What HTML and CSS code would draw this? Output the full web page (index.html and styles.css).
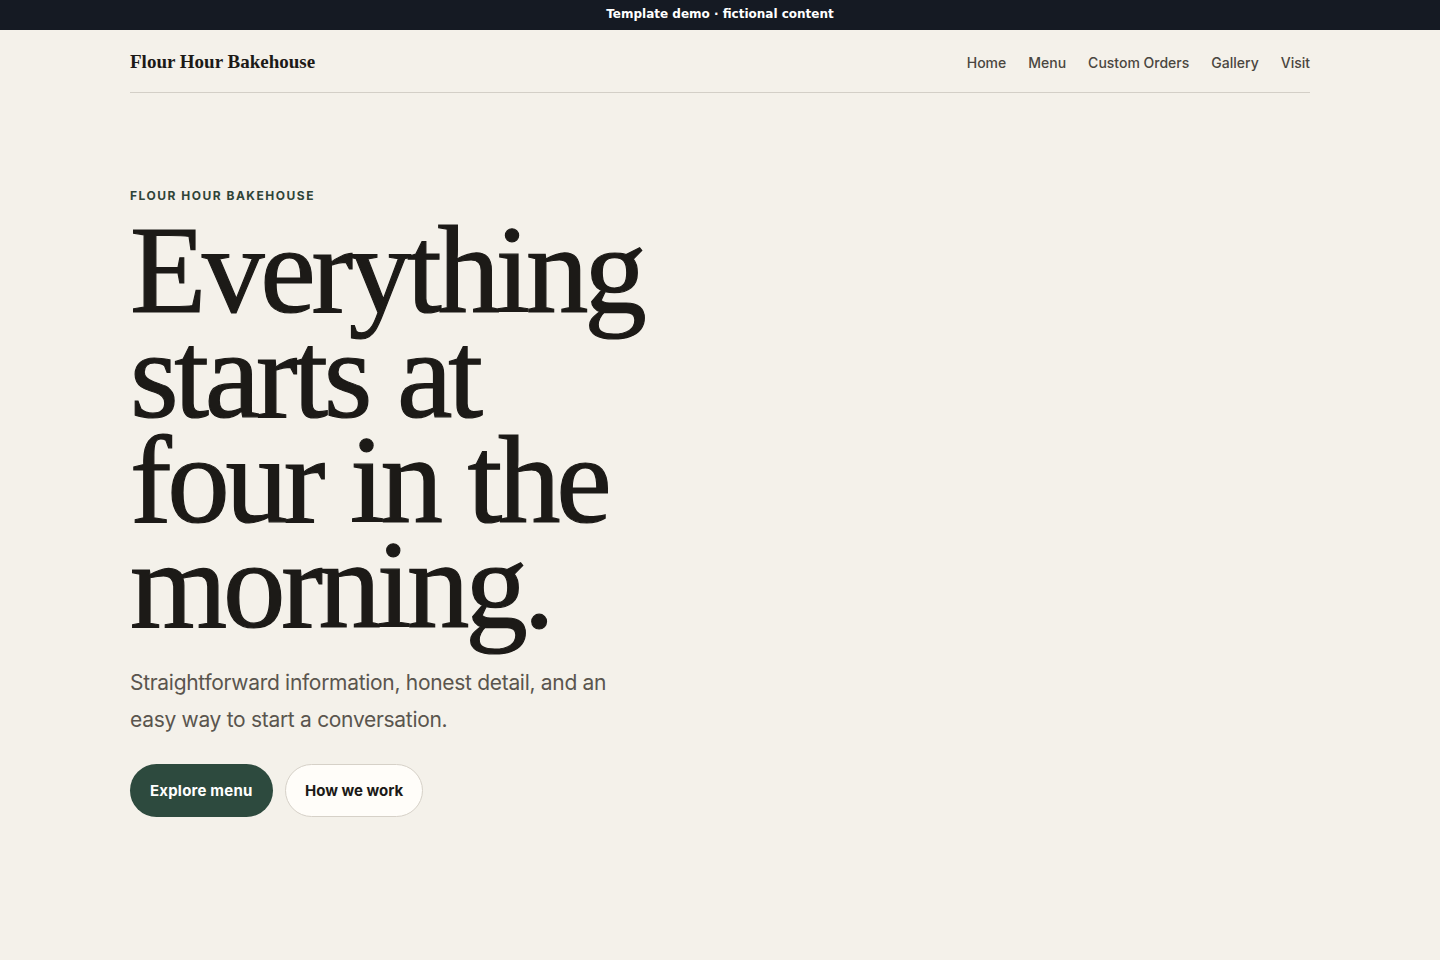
FILE: index.html
```html
<!DOCTYPE html>
<html lang="en">
<head>
<meta charset="utf-8">
<title>Flour Hour Bakehouse</title>
<link rel="stylesheet" href="styles.css">
</head>
<body>
<div class="demo-bar">Template demo · fictional content</div>
<div class="container">
  <header class="site-header">
    <a class="brand" href="#">Flour Hour Bakehouse</a>
    <nav class="nav">
      <a href="#">Home</a>
      <a href="#">Menu</a>
      <a href="#">Custom Orders</a>
      <a href="#">Gallery</a>
      <a href="#">Visit</a>
    </nav>
  </header>
  <main class="hero">
    <p class="eyebrow">FLOUR HOUR BAKEHOUSE</p>
    <h1 class="headline">Everything starts at four in the morning.</h1>
    <p class="lede">Straightforward information, honest detail, and an easy way to start a conversation.</p>
    <div class="actions">
      <a class="btn btn-primary" href="#">Explore menu</a>
      <a class="btn btn-secondary" href="#">How we work</a>
    </div>
  </main>
</div>
</body>
</html>
```
FILE: styles.css
```css
* { box-sizing: border-box; }
html, body { margin: 0; padding: 0; }
body {
  background: #f4f1ea;
  color: #1c1a17;
  font-family: Inter, "Noto Sans", sans-serif;
}
a { text-decoration: none; color: inherit; }

.demo-bar {
  height: 30px;
  background: #151a23;
  color: #ffffff;
  font-family: "DejaVu Sans", sans-serif;
  font-weight: bold;
  font-size: 12px;
  display: flex;
  align-items: center;
  justify-content: center;
  padding-bottom: 2px;
}

.container {
  width: 1180px;
  margin: 0 auto;
}

.site-header {
  height: 63px;
  display: flex;
  align-items: center;
  justify-content: space-between;
  border-bottom: 1px solid #d3cfc7;
  padding-top: 2px;
}
.brand {
  font-family: "Liberation Serif", serif;
  font-weight: bold;
  font-size: 19px;
  color: #1c1a17;
}
.nav {
  display: flex;
  gap: 22px;
  padding-top: 1px;
}
.nav a {
  font-size: 14px;
  font-weight: 500;
  color: #4a4640;
}

.hero {
  padding-top: 95px;
}
.eyebrow {
  margin: 0;
  font-size: 12px;
  font-weight: 700;
  letter-spacing: 0.125em;
  color: #2f4438;
  line-height: 16px;
}
.headline {
  margin: 14px 0 0;
  width: 560px;
  font-family: "Liberation Serif", serif;
  font-weight: normal;
  font-size: 125px;
  line-height: 105px;
  letter-spacing: -4.3px;
  word-spacing: 2px;
  color: #1c1a17;
  -webkit-text-stroke: 1.2px #1c1a17;
}
.lede {
  margin: 26px 0 0;
  width: 500px;
  font-size: 21px;
  line-height: 37px;
  color: #5a554e;
  letter-spacing: -0.3px;
}
.actions {
  margin-top: 26px;
  display: flex;
  gap: 12px;
}
.btn {
  height: 53px;
  border-radius: 27px;
  display: inline-flex;
  align-items: center;
  font-size: 15px;
  font-weight: 700;
}
.btn-primary {
  background: #2d4a3e;
  color: #ffffff;
  padding: 0 21px 0 20px;
  letter-spacing: 0.2px;
}
.btn-secondary {
  background: #fffdf9;
  color: #1c1a17;
  border: 1px solid #d6d1c8;
  padding: 0 18.5px;
}
```
